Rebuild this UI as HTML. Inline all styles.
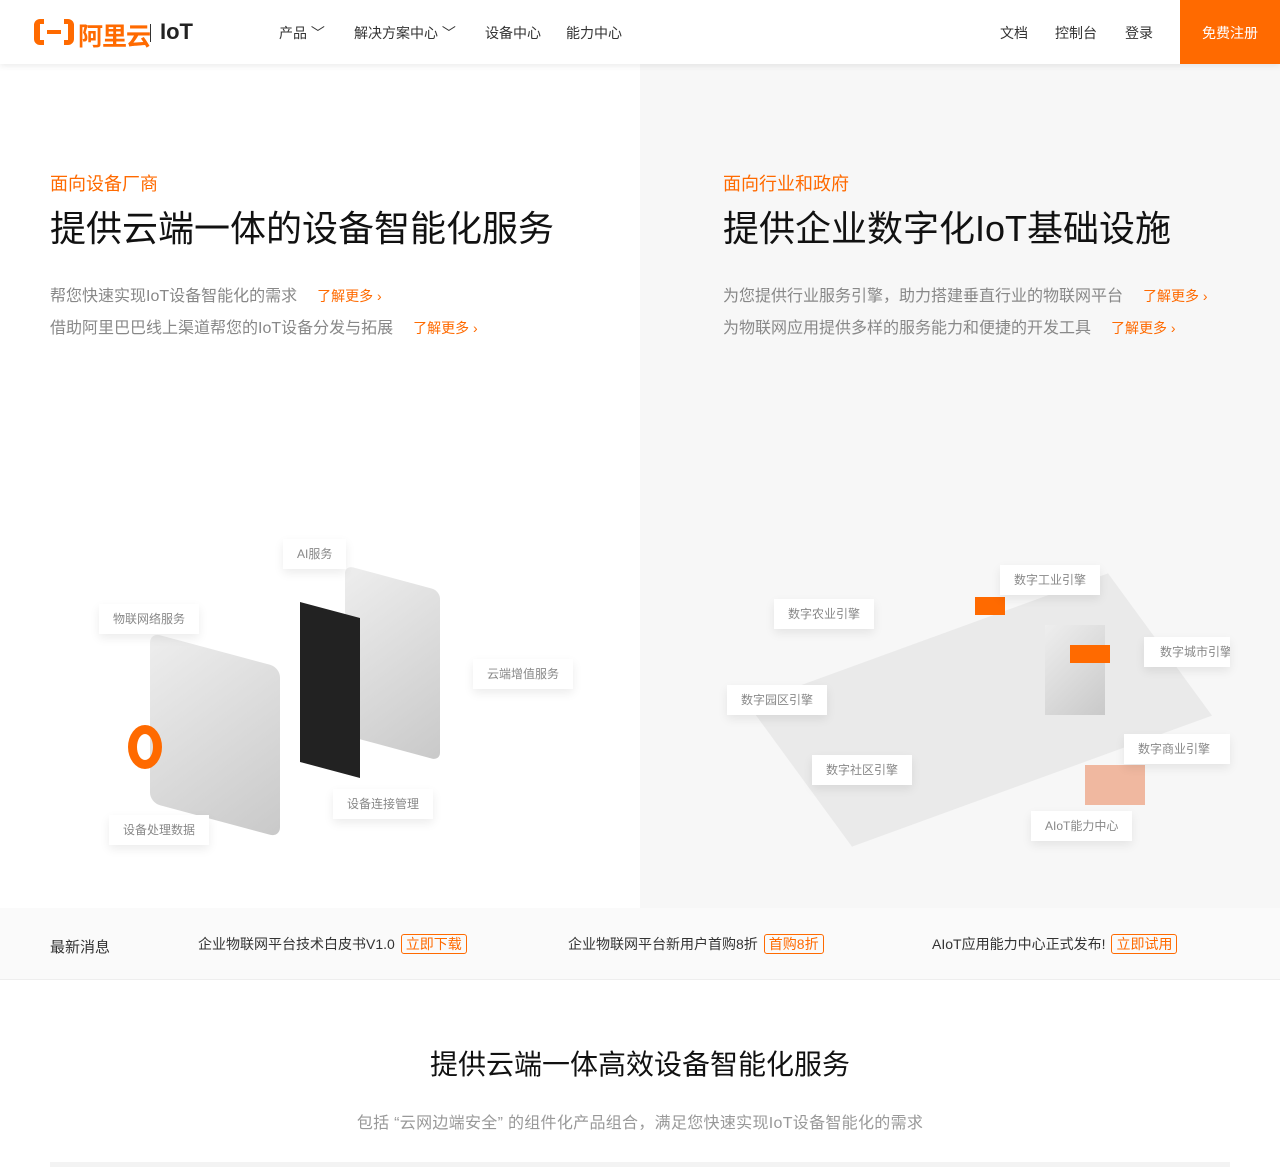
<!DOCTYPE html>
<html><head><meta charset="utf-8"><style>
*{margin:0;padding:0;box-sizing:border-box}
body{width:1280px;height:1167px;overflow:hidden;font-family:"Liberation Sans","Noto Sans CJK SC",sans-serif;background:#fff;position:relative;color:#333}
.hdr{position:absolute;top:0;left:0;width:1280px;height:64px;background:#fff;box-shadow:0 2px 6px rgba(0,0,0,.08);z-index:5}
.hdr .a{position:absolute;top:23px;font-size:14px;color:#333}
.reg{position:absolute;right:0;top:0;width:100px;height:64px;background:#ff6a00;color:#fff;font-size:14px;text-align:center;line-height:66px}
.l{position:absolute;left:0;top:64px;width:640px;height:844px;background:#fff}
.r{position:absolute;left:640px;top:64px;width:640px;height:844px;background:#f7f7f7}
.sub{position:absolute;font-size:18px;color:#ff6a00}
.h1{position:absolute;font-size:36px;color:#111}
.p{position:absolute;font-size:16px;color:#888;white-space:nowrap}
.p b{font-weight:normal;color:#ff6a00;font-size:14px;margin-left:20px}
.tag{position:absolute;background:#fff;font-size:12px;color:#888;padding:0 14px;height:30px;line-height:30px;box-shadow:0 4px 10px rgba(0,0,0,.08);white-space:nowrap;overflow:hidden}
.news{position:absolute;top:908px;left:0;width:1280px;height:72px;background:#fafafa;border-bottom:1px solid #eee}
.n{position:absolute;top:26px;font-size:14px;color:#333}
.n span{border:1px solid #ff6a00;color:#ff6a00;border-radius:3px;padding:1px 4px;margin-left:6px}
.gb{position:absolute;background:linear-gradient(135deg,#eee,#c9c9c9);}
</style></head><body>
<div class="hdr">
<div style="position:absolute;left:34px;top:19px;width:40px;height:26px;border:5px solid #ff6a00;border-radius:6px;border-left-width:6px;border-right-width:6px"></div>
<div style="position:absolute;left:44px;top:17px;width:20px;height:30px;background:#fff"></div>
<div style="position:absolute;left:47px;top:30px;width:14px;height:4px;background:#ff6a00"></div>
<div style="position:absolute;left:78px;top:17px;font-size:25px;color:#ff6a00;font-weight:bold;letter-spacing:-1px">阿里云</div>
<div style="position:absolute;left:150px;top:24px;width:1px;height:18px;background:#333"></div>
<div style="position:absolute;left:160px;top:19px;font-size:22px;color:#222;font-weight:bold">IoT</div>
<div class="a" style="left:279px">产品 ﹀</div>
<div class="a" style="left:354px">解决方案中心 ﹀</div>
<div class="a" style="left:485px">设备中心</div>
<div class="a" style="left:566px">能力中心</div>
<div class="a" style="left:1000px">文档</div>
<div class="a" style="left:1055px">控制台</div>
<div class="a" style="left:1125px">登录</div>
<div class="reg">免费注册</div>
</div>
<div class="l"></div><div class="r"></div>
<div class="sub" style="left:50px;top:170px">面向设备厂商</div>
<div class="h1" style="left:50px;top:200px">提供云端一体的设备智能化服务</div>
<div class="p" style="left:50px;top:282px">帮您快速实现IoT设备智能化的需求<b>了解更多 ›</b></div>
<div class="p" style="left:50px;top:314px">借助阿里巴巴线上渠道帮您的IoT设备分发与拓展<b>了解更多 ›</b></div>
<div class="sub" style="left:723px;top:170px">面向行业和政府</div>
<div class="h1" style="left:723px;top:200px">提供企业数字化IoT基础设施</div>
<div class="p" style="left:723px;top:282px">为您提供行业服务引擎，助力搭建垂直行业的物联网平台<b>了解更多 ›</b></div>
<div class="p" style="left:723px;top:314px">为物联网应用提供多样的服务能力和便捷的开发工具<b>了解更多 ›</b></div>
<!-- device illustration -->
<div class="gb" style="left:345px;top:578px;width:95px;height:170px;border-radius:8px;transform:skewY(15deg)"></div>
<div style="position:absolute;left:300px;top:610px;width:60px;height:160px;background:#222;transform:skewY(15deg)"></div>
<div class="gb" style="left:150px;top:650px;width:130px;height:170px;border-radius:10px;transform:skewY(15deg)"></div>
<div style="position:absolute;left:128px;top:725px;width:34px;height:44px;border:9px solid #ff6a00;border-radius:50%"></div>
<div class="tag" style="left:283px;top:539px">AI服务</div>
<div class="tag" style="left:99px;top:604px">物联网络服务</div>
<div class="tag" style="left:473px;top:659px">云端增值服务</div>
<div class="tag" style="left:333px;top:789px">设备连接管理</div>
<div class="tag" style="left:109px;top:815px">设备处理数据</div>
<!-- city -->
<div style="position:absolute;left:800px;top:620px;width:360px;height:180px;background:#e6e6e6;transform:skewY(-20deg) skewX(30deg);opacity:.8"></div>
<div class="gb" style="left:1045px;top:625px;width:60px;height:90px"></div>
<div style="position:absolute;left:975px;top:597px;width:30px;height:18px;background:#ff6a00"></div>
<div style="position:absolute;left:1070px;top:645px;width:40px;height:18px;background:#ff6a00"></div>
<div style="position:absolute;left:1085px;top:765px;width:60px;height:40px;background:#f0b8a0"></div>
<div class="tag" style="left:1000px;top:565px">数字工业引擎</div>
<div class="tag" style="left:774px;top:599px">数字农业引擎</div>
<div class="tag" style="left:1144px;top:637px;padding:0 0 0 16px;width:86px">数字城市引擎</div>
<div class="tag" style="left:727px;top:685px">数字园区引擎</div>
<div class="tag" style="left:1124px;top:734px;width:106px">数字商业引擎</div>
<div class="tag" style="left:812px;top:755px">数字社区引擎</div>
<div class="tag" style="left:1031px;top:811px">AIoT能力中心</div>
<div class="news">
<div class="n" style="left:50px;font-size:15px;top:28px">最新消息</div>
<div class="n" style="left:198px">企业物联网平台技术白皮书V1.0<span>立即下载</span></div>
<div class="n" style="left:568px">企业物联网平台新用户首购8折<span>首购8折</span></div>
<div class="n" style="left:932px">AIoT应用能力中心正式发布!<span>立即试用</span></div>
</div>
<div style="position:absolute;top:1043px;left:0;width:1280px;text-align:center;font-size:28px;color:#111">提供云端一体高效设备智能化服务</div>
<div style="position:absolute;top:1109px;left:0;width:1280px;text-align:center;font-size:16px;color:#999;letter-spacing:0.3px">包括 “云网边端安全” 的组件化产品组合，满足您快速实现IoT设备智能化的需求</div>
<div style="position:absolute;top:1162px;left:50px;width:1180px;height:5px;background:#f3f3f3"></div>
</body></html>
